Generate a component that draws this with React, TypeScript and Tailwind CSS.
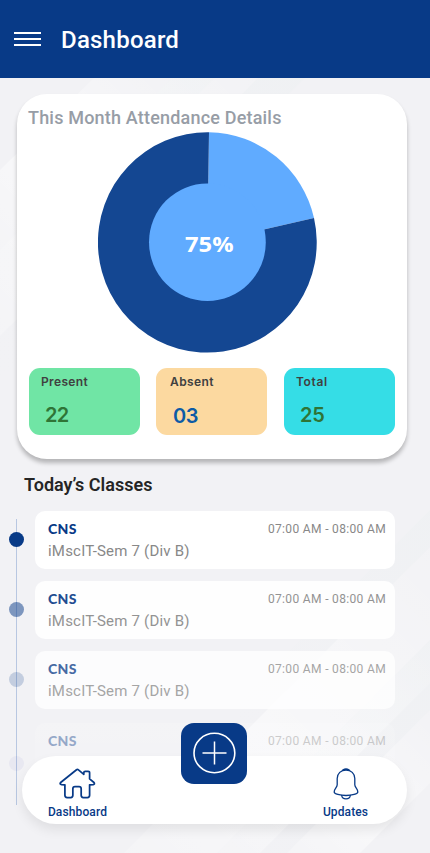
import React from "react";

const stats = [
  { label: "Present", value: "22", tile: "bg-[#70e5a5]", tone: "text-[#2f7436]", pad: "pl-[12px]", num: "ml-[4px] mt-[10px] tracking-[-0.6px]", track: "tracking-[0.35px]" },
  { label: "Absent", value: "03", tile: "bg-[#fcd9a0] mr-[1px]", tone: "text-[#0d5ba6]", pad: "pl-[14px]", num: "ml-[3px] mt-[11px] tracking-[-0.4px]", track: "tracking-[0.4px]" },
  { label: "Total", value: "25", tile: "bg-[#35dde6]", tone: "text-[#2f7436]", pad: "pl-[12px]", num: "ml-[4px] mt-[10px] tracking-[-0.3px]", track: "tracking-[0.6px]" },
];

const classes = [
  { card: "bg-white mb-[12px]", dot: "bg-[#083a87] mt-[21px]", text: "opacity-100" },
  { card: "bg-white/90 mb-[12px]", dot: "bg-[#083a87]/50 mt-[21px]", text: "opacity-90" },
  { card: "bg-white/75 mb-[14px]", dot: "bg-[#083a87]/20 mt-[21px]", text: "opacity-75" },
  { card: "bg-linear-to-b from-white/15 to-white/5", dot: "bg-[#3a3ab0]/5 mt-[33px]", text: "opacity-40" },
];

function Backdrop() {
  return (
    <svg className="absolute inset-0" width="430" height="853" viewBox="0 0 430 853" fill="none" aria-hidden="true">
      <defs>
        <linearGradient id="ray" x1="1" y1="0" x2="0" y2="1">
          <stop offset="0" stopColor="#fff" stopOpacity="0.05" />
          <stop offset="0.6" stopColor="#fff" stopOpacity="0.5" />
          <stop offset="1" stopColor="#fff" stopOpacity="0.2" />
        </linearGradient>
        <linearGradient id="shade" x1="1" y1="0" x2="0" y2="1">
          <stop offset="0" stopColor="#edf0f2" stopOpacity="0.5" />
          <stop offset="1" stopColor="#eef1f3" stopOpacity="0" />
        </linearGradient>
      </defs>
      <path d="M94 78H172L0 250V170Z" fill="url(#ray)" />
      <path d="M172 78H215L0 290V250Z" fill="url(#shade)" />
      <path d="M172 78H258L0 336V250Z" fill="url(#ray)" />
      <path d="M258 78H305L0 383V336Z" fill="url(#shade)" />
      <path d="M430 510V547L240 737V700Z" fill="url(#shade)" />
      <path d="M430 547V640L217 853H124Z" fill="url(#ray)" />
      <path d="M430 640V710L287 853H217Z" fill="url(#shade)" />
      <path d="M430 640V683L260 853H217Z" fill="url(#ray)" />
      <path d="M430 710V783L360 853H287Z" fill="url(#ray)" />
    </svg>
  );
}

function AttendanceChart() {
  return (
    <div className="relative ml-[81px] h-[221px] w-[219px]">
      <svg width="219" height="221" viewBox="98 131.5 219 221" className="block">
        <path d="M207.4 242L209 131.7A109.4 110.2 0 0 1 314 217.4Z" fill="#60abff" />
        <path d="M207.4 242L314 217.4A109.4 110.2 0 1 1 209 131.7Z" fill="#144792" />
        <ellipse cx="207.4" cy="241.7" rx="58.4" ry="58.8" fill="#60abff" />
      </svg>
      <span className="absolute left-[87px] top-[99px] origin-left scale-x-[1.13] font-['Open_Sans',sans-serif] text-[21px] font-bold leading-[26px] text-white">75%</span>
    </div>
  );
}

function HomeIcon() {
  return (
    <svg width="37" height="31" viewBox="0 0 38 32" fill="none" stroke="#083a87" strokeWidth="1.8" strokeLinejoin="round" strokeLinecap="round">
      <path d="M18 1.8 1.6 15Q.2 16.9 2.6 17.2L6 17.4V28.2Q6 30.5 8.3 30.5H12Q14.2 30.5 14.2 28.2V21.4Q14.2 19.2 16.4 19.2H20.6Q22.8 19.2 22.8 21.4V28.2Q22.8 30.5 25 30.5H29.2Q31.5 30.5 31.5 28.2V17.4L35.2 17.2Q37.2 16.8 36 15L31.5 11.3V4.9Q31.5 3.4 30 3.4H27Q25.5 3.4 25.5 4.9V6.5L20 1.9Q19 1 18 1.8Z" />
    </svg>
  );
}

function BellIcon() {
  return (
    <svg width="26" height="32" viewBox="0 0 26 32" fill="none" stroke="#083a87" strokeWidth="1.3" strokeLinejoin="round" strokeLinecap="round">
      <path d="M4.2 16.7V10.5C4.2 5.5 8 2 13 2s8.8 3.5 8.8 8.5v6.2c0 2.7 3 4.4 3 7.2 0 2.1-5.8 3.6-11.8 3.6S1.2 26 1.2 23.9c0-2.8 3-4.5 3-7.2Z" />
      <path d="M10.2 2Q13 .4 15.8 2" strokeWidth="1.8" />
      <path d="M8.7 27.5C9.2 32 16.8 32 17.3 27.5" />
    </svg>
  );
}

export default function App() {
  return (
    <div className="relative h-[853px] w-[430px] overflow-hidden bg-[#f2f2f5] font-['Roboto',sans-serif]">
      <Backdrop />
      <header className="relative flex h-[78px] items-center bg-[#083a87] pl-[14px]">
        <button aria-label="Menu" className="flex w-[27px] flex-col gap-[4px]">
          <span className="h-[2px] bg-white" />
          <span className="h-[2px] bg-white" />
          <span className="h-[2px] bg-white" />
        </button>
        <h1 className="ml-[20px] mt-[2px] text-[24px] font-medium leading-[28px] tracking-[0.22px] text-white">Dashboard</h1>
      </header>

      <main className="relative">
        <section className="ml-[17px] mt-[16px] h-[365px] w-[390px] rounded-[30px] bg-white pt-[13px] shadow-[0_4px_4px_rgba(0,0,0,0.25)]">
          <h2 className="ml-[11px] h-[24.5px] whitespace-nowrap text-[18px] font-medium leading-[22px] tracking-[0.19px] text-[#979da6]">This Month Attendance Details</h2>
          <AttendanceChart />
          <div className="mx-[12px] mt-[15.5px] flex gap-[16px]">
            {stats.map((s) => (
              <div key={s.label} className={`h-[67px] w-[111px] rounded-[11px] pt-[5px] font-['Inter',sans-serif] ${s.tile} ${s.pad}`}>
                <div className={`text-[12px] font-semibold leading-[18px] text-[#404040] ${s.track}`}>{s.label}</div>
                <div className={`text-[20px] font-semibold leading-[28px] ${s.tone} ${s.num}`}>{s.value}</div>
              </div>
            ))}
          </div>
        </section>

        <h2 className="ml-[24px] mt-[15px] h-[37px] text-[18px] font-semibold leading-[22px] text-[#252525]">Today’s Classes</h2>

        <section className="relative">
          <span className="absolute left-[16px] top-[8px] h-[286px] w-px bg-[#a9bbdc]/80" />
          {classes.map((c, i) => (
            <div key={i} className="relative flex items-start pl-[9px]">
              <span className={`size-[15px] shrink-0 rounded-full ${c.dot}`} />
              <article className={`ml-[11px] h-[58px] w-[360px] rounded-[10px] pl-[13px] pr-[9px] pt-[7px] ${c.card}`}>
                <div className={c.text}>
                  <div className="flex h-[22px] items-center justify-between">
                    <span className="font-['Lato',sans-serif] text-[14px] font-black leading-[20px] tracking-[0.3px] text-[#083a87]">CNS</span>
                    <span className="text-[12px] leading-[20px] tracking-[0.34px] text-[#888]">07:00 AM - 08:00 AM</span>
                  </div>
                  {i < 3 && <div className="text-[15px] leading-[22px] tracking-[0.2px] text-[#888]">iMscIT-Sem 7 (Div B)</div>}
                </div>
              </article>
            </div>
          ))}
        </section>
      </main>

      <nav className="absolute bottom-[29px] left-[22px] flex h-[68px] w-[385px] rounded-[34px] bg-white shadow-[0_6px_12px_rgba(0,0,0,0.08)]">
        <a className="ml-[26px] flex w-[59px] flex-col items-center pt-[12px]">
          <HomeIcon />
          <span className="mt-[5px] text-[12px] font-medium leading-[16px] tracking-[0.13px] text-[#083a87]">Dashboard</span>
        </a>
        <button aria-label="Add" className="-mt-[33px] ml-[74px] flex h-[61px] w-[66px] items-center justify-center rounded-[13px] bg-[#083a87]">
          <svg width="44" height="42" viewBox="0 0 44 42" fill="none" stroke="white" className="-mt-[2px]">
            <ellipse cx="22.4" cy="21" rx="20.4" ry="19.7" strokeWidth="1.6" />
            <path d="M22.5 9.5v23M10.5 21h24" strokeWidth="1.5" />
          </svg>
        </button>
        <a className="ml-[74px] flex w-[49px] flex-col items-center pt-[12px]">
          <BellIcon />
          <span className="mt-[4px] text-[12px] font-medium leading-[16px] tracking-[0.1px] text-[#083a87]">Updates</span>
        </a>
      </nav>
    </div>
  );
}
